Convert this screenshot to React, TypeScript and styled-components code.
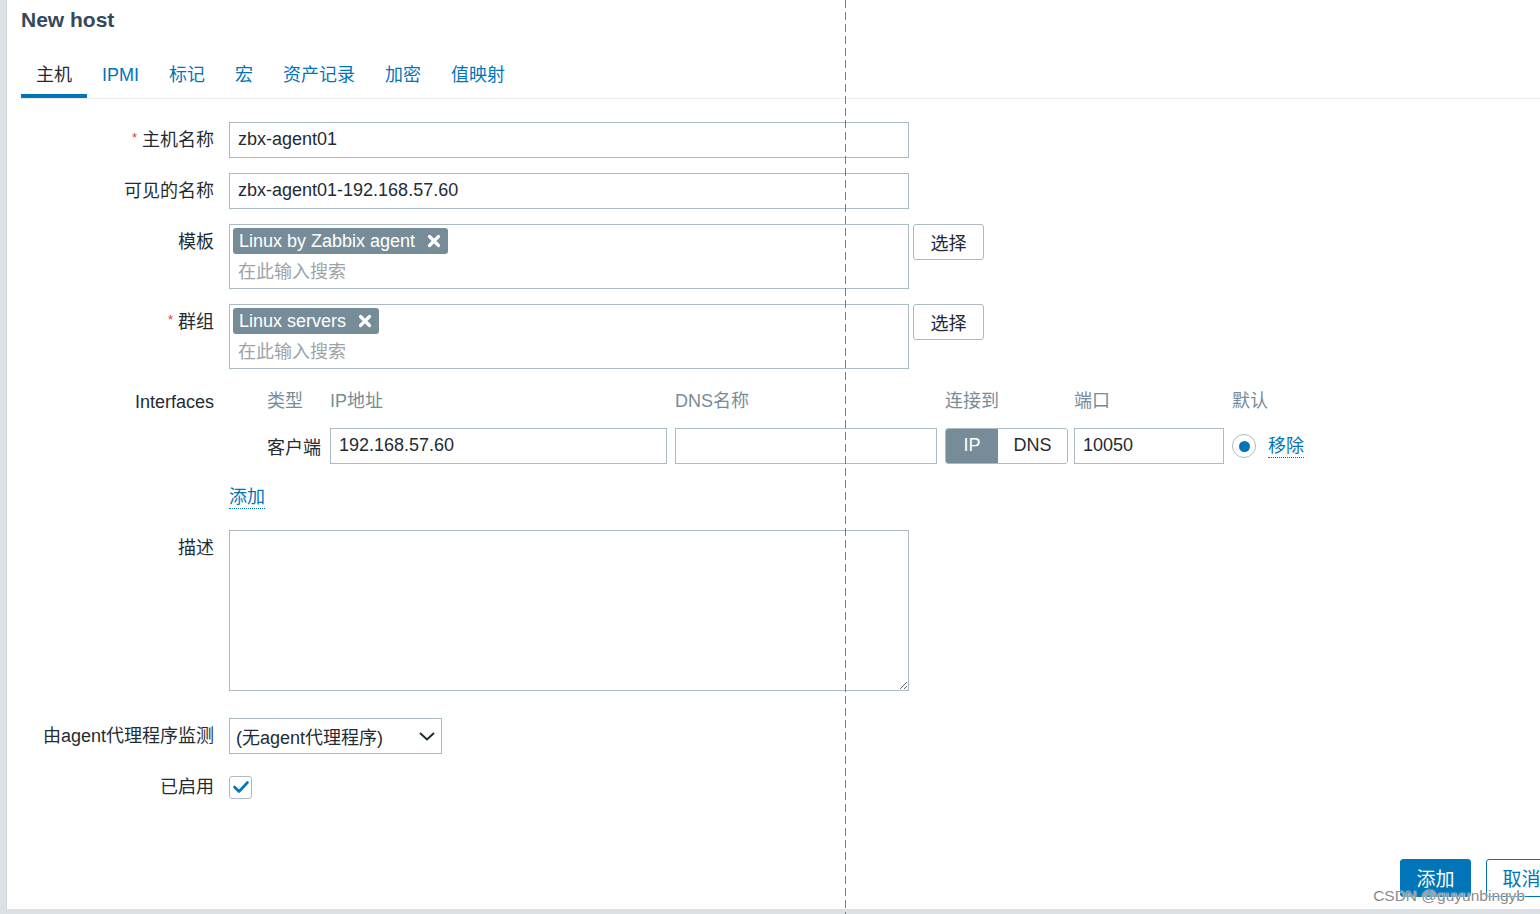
import * as React from 'react';
import styled, { createGlobalStyle } from 'styled-components';

const GlobalStyle = createGlobalStyle`
  html, body {
    margin: 0;
    padding: 0;
    background: #dce1e5;
    overflow: hidden;
  }
  body {
    font-family: "Liberation Sans", Arial, "Noto Sans CJK SC", sans-serif;
    color: #1f2c33;
  }
  * {
    box-sizing: border-box;
  }
`;

const colors = {
  text: '#1f2c33',
  link: '#0275b8',
  border: '#acbbc2',
  muted: '#768d99',
  placeholder: '#9ea3a7',
  required: '#e33734'
};

const Page = styled.div`
  position: relative;
  width: 1540px;
  height: 914px;
  overflow: hidden;
  display: flex;
  padding-left: 6px;
`;

const Dialog = styled.div`
  display: flex;
  flex-direction: column;
  flex: none;
  width: 1566px;
  height: 909px;
  background: #ffffff;
  border-left: 1px solid #cfd6db;
  padding: 0 15px 0 14px;
`;

const Title = styled.h1`
  margin: 0;
  height: 56px;
  padding-top: 8px;
  font-size: 21px;
  line-height: 24px;
  font-weight: bold;
  color: #35495a;
`;

const TabList = styled.div`
  display: flex;
  border-bottom: 1px solid #ebeef0;
`;

const Tab = styled.div<{ $active?: boolean }>`
  height: 42px;
  padding: 0 15px;
  display: flex;
  align-items: center;
  font-size: 18px;
  line-height: 20px;
  color: ${(p) => (p.$active ? colors.text : colors.link)};
  border-bottom: 4px solid ${(p) => (p.$active ? colors.link : 'transparent')};
`;

const Form = styled.div`
  padding-top: 23px;
`;

const Row = styled.div`
  display: grid;
  grid-template-columns: 193px auto;
  column-gap: 15px;
  margin-bottom: 15px;
  align-items: start;
`;

const Label = styled.div`
  height: 36px;
  text-align: right;
  font-size: 18px;
  line-height: 36px;
  color: ${colors.text};
  white-space: nowrap;
`;

const Asterisk = styled.span`
  position: relative;
  top: -4px;
  color: ${colors.required};
  font-size: 13px;
  line-height: 1;
  margin-right: 5px;
`;

const Field = styled.div`
  display: flex;
  align-items: flex-start;
  gap: 4px;
  min-height: 36px;
`;

const TextInput = styled.input<{ $width?: number }>`
  width: ${(p) => p.$width || 680}px;
  height: 36px;
  border: 1px solid ${colors.border};
  border-radius: 0;
  padding: 0 8px 1px;
  font-family: inherit;
  font-size: 18px;
  color: ${colors.text};
  background: #fff;
  outline: none;
`;

const MultiSelect = styled.div`
  width: 680px;
  height: 65px;
  border: 1px solid ${colors.border};
  padding: 3px;
`;

const Tag = styled.span`
  display: inline-flex;
  align-items: center;
  gap: 12px;
  height: 26px;
  padding: 0 7px 0 6px;
  background: ${colors.muted};
  border-radius: 3px;
  color: #fff;
  font-size: 18px;
  line-height: 20px;
`;

const Placeholder = styled.div`
  height: 30px;
  line-height: 30px;
  padding: 3px 0 0 5px;
  font-size: 18px;
  color: ${colors.placeholder};
`;

const SelectButton = styled.button`
  width: 71px;
  height: 36px;
  border: 1px solid ${colors.border};
  border-radius: 3px;
  background: #fff;
  font-family: inherit;
  font-size: 18px;
  color: ${colors.text};
  padding: 0 0 1px;
`;

const IfaceGrid = styled.div`
  display: grid;
  grid-template-columns: 38px 63px 345px 270px 129px 158px auto;
  grid-template-rows: 36px 36px;
  row-gap: 8px;
  align-items: center;
`;

const IfaceHead = styled.div<{ $col: number }>`
  grid-column: ${(p) => p.$col};
  font-size: 18px;
  color: ${colors.muted};
  line-height: 20px;
  margin-top: -2px;
`;

const IfaceType = styled.div`
  grid-column: 2;
  font-size: 18px;
  color: ${colors.text};
`;

const Toggle = styled.div`
  display: flex;
  width: 123px;
  height: 36px;
  border: 1px solid ${colors.border};
  border-radius: 3px;
  overflow: hidden;
`;

const ToggleOption = styled.div<{ $on?: boolean }>`
  flex: ${(p) => (p.$on ? '0 0 52px' : '1')};
  display: flex;
  align-items: center;
  justify-content: center;
  padding-bottom: 1px;
  font-size: 18px;
  background: ${(p) => (p.$on ? colors.muted : '#fff')};
  color: ${(p) => (p.$on ? '#fff' : colors.text)};
`;

const DefaultCell = styled.div`
  display: flex;
  align-items: center;
  gap: 12px;
`;

const Radio = styled.span`
  display: flex;
  align-items: center;
  justify-content: center;
  width: 24px;
  height: 24px;
  border: 1px solid ${colors.border};
  border-radius: 50%;
  background: #fff;

  &::after {
    content: '';
    width: 11px;
    height: 11px;
    border-radius: 50%;
    background: ${colors.link};
  }
`;

const Link = styled.span`
  font-size: 18px;
  line-height: 22px;
  color: ${colors.link};
  border-bottom: 1px dotted ${colors.link};
`;

const LinkCell = styled.div`
  display: flex;
  align-items: center;
  height: 36px;
`;

const TextArea = styled.textarea`
  width: 680px;
  height: 161px;
  margin-bottom: 12px;
  border: 1px solid ${colors.border};
  border-radius: 0;
  resize: both;
  font-family: inherit;
  font-size: 18px;
  outline: none;
  display: block;
`;

const FakeSelect = styled.div`
  display: flex;
  align-items: center;
  justify-content: space-between;
  width: 213px;
  height: 36px;
  border: 1px solid ${colors.border};
  padding: 0 5px 1px 6px;
  font-size: 18px;
  color: ${colors.text};
`;

const CheckboxCell = styled.div`
  display: flex;
  align-items: center;
  height: 36px;
`;

const Checkbox = styled.span`
  display: flex;
  align-items: center;
  justify-content: center;
  width: 23px;
  height: 23px;
  border: 1px solid ${colors.border};
  border-radius: 3px;
  background: #fff;
`;

const Footer = styled.div`
  margin-top: auto;
  display: flex;
  justify-content: flex-end;
  gap: 15px;
  padding-bottom: 12px;
`;

const FooterButton = styled.button<{ $primary?: boolean }>`
  width: 71px;
  height: 38px;
  border: 1px solid ${colors.link};
  border-radius: 3px;
  background: ${(p) => (p.$primary ? colors.link : '#fff')};
  color: ${(p) => (p.$primary ? '#fff' : colors.link)};
  font-family: inherit;
  font-size: 19px;
  padding: 0 0 2px;
`;

const Guide = styled.div`
  position: absolute;
  left: 845px;
  top: 0;
  width: 1px;
  height: 914px;
  background: repeating-linear-gradient(to bottom, #2b95db 0 8px, transparent 8px 12px);
`;

const Watermark = styled.div`
  position: absolute;
  right: 15px;
  bottom: 9px;
  font-size: 15.5px;
  color: #8c8c8c;
  text-shadow: 0 0 2px #fff, 0 0 1px #fff;
`;

const CrossIcon = () => (
  <svg width="14" height="14" viewBox="0 0 14 14">
    <path d="M2.5 2.5 L11.5 11.5 M11.5 2.5 L2.5 11.5" stroke="#fff" strokeWidth="3.2" strokeLinecap="round" />
  </svg>
);

const ChevronIcon = () => (
  <svg width="18" height="12" viewBox="0 0 18 12">
    <path d="M2 3 L9 9.5 L16 3" stroke={colors.text} strokeWidth="2" fill="none" />
  </svg>
);

const CheckIcon = () => (
  <svg width="18" height="16" viewBox="0 0 18 16">
    <path d="M2.5 8 L7 12.5 L15.5 3.5" stroke={colors.link} strokeWidth="2.6" fill="none" strokeLinecap="round" strokeLinejoin="round" />
  </svg>
);

const tabs = ['主机', 'IPMI', '标记', '宏', '资产记录', '加密', '值映射'];

const FieldLabel: React.FunctionComponent<{ required?: boolean; children?: React.ReactNode }> = ({ required, children }) => (
  <Label>
    {required && <Asterisk>*</Asterisk>}
    {children}
  </Label>
);

export default function App() {
  return (
    <>
      <GlobalStyle />
      <Page>
        <Dialog>
          <Title>New host</Title>
          <TabList>
            {tabs.map((t, i) => (
              <Tab key={t} $active={i === 0}>{t}</Tab>
            ))}
          </TabList>

          <Form>
            <Row>
              <FieldLabel required>主机名称</FieldLabel>
              <Field>
                <TextInput readOnly value="zbx-agent01" />
              </Field>
            </Row>

            <Row>
              <FieldLabel>可见的名称</FieldLabel>
              <Field>
                <TextInput readOnly value="zbx-agent01-192.168.57.60" />
              </Field>
            </Row>

            <Row>
              <FieldLabel>模板</FieldLabel>
              <Field>
                <MultiSelect>
                  <Tag>Linux by Zabbix agent <CrossIcon /></Tag>
                  <Placeholder>在此输入搜索</Placeholder>
                </MultiSelect>
                <SelectButton>选择</SelectButton>
              </Field>
            </Row>

            <Row>
              <FieldLabel required>群组</FieldLabel>
              <Field>
                <MultiSelect>
                  <Tag>Linux servers <CrossIcon /></Tag>
                  <Placeholder>在此输入搜索</Placeholder>
                </MultiSelect>
                <SelectButton>选择</SelectButton>
              </Field>
            </Row>

            <Row>
              <FieldLabel>Interfaces</FieldLabel>
              <IfaceGrid>
                <IfaceHead $col={2}>类型</IfaceHead>
                <IfaceHead $col={3}>IP地址</IfaceHead>
                <IfaceHead $col={4}>DNS名称</IfaceHead>
                <IfaceHead $col={5}>连接到</IfaceHead>
                <IfaceHead $col={6}>端口</IfaceHead>
                <IfaceHead $col={7}>默认</IfaceHead>

                <IfaceType>客户端</IfaceType>
                <TextInput readOnly value="192.168.57.60" $width={337} />
                <TextInput readOnly value="" $width={262} />
                <Toggle>
                  <ToggleOption $on>IP</ToggleOption>
                  <ToggleOption>DNS</ToggleOption>
                </Toggle>
                <TextInput readOnly value="10050" $width={150} />
                <DefaultCell>
                  <Radio />
                  <Link>移除</Link>
                </DefaultCell>
              </IfaceGrid>
            </Row>

            <Row>
              <Label />
              <LinkCell>
                <Link>添加</Link>
              </LinkCell>
            </Row>

            <Row>
              <FieldLabel>描述</FieldLabel>
              <div>
                <TextArea readOnly value="" />
              </div>
            </Row>

            <Row>
              <FieldLabel>由agent代理程序监测</FieldLabel>
              <Field>
                <FakeSelect>
                  (无agent代理程序)
                  <ChevronIcon />
                </FakeSelect>
              </Field>
            </Row>

            <Row>
              <FieldLabel>已启用</FieldLabel>
              <CheckboxCell>
                <Checkbox>
                  <CheckIcon />
                </Checkbox>
              </CheckboxCell>
            </Row>
          </Form>

          <Footer>
            <FooterButton $primary>添加</FooterButton>
            <FooterButton>取消</FooterButton>
          </Footer>
        </Dialog>
        <Guide />
        <Watermark>CSDN @guyunbingyb</Watermark>
      </Page>
    </>
  );
}
